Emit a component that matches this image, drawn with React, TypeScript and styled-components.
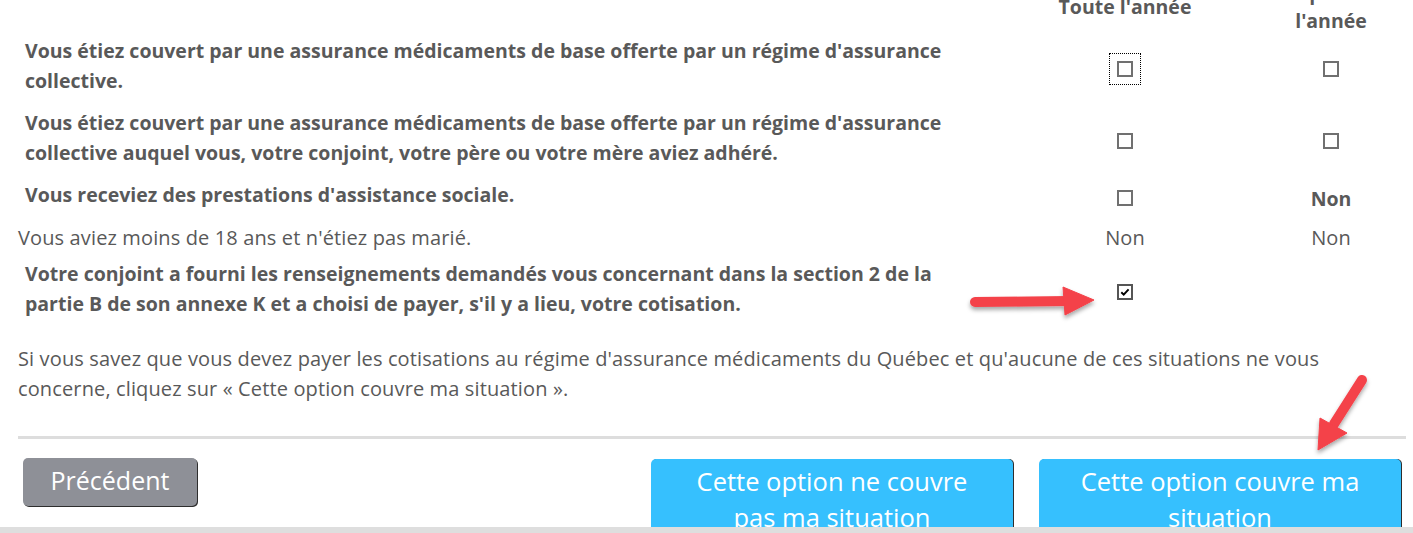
import React from "react";
import styled, { createGlobalStyle } from "styled-components";

const Global = createGlobalStyle`
  html, body { margin: 0; padding: 0; overflow: hidden; background: #ffffff; }
  body { font-family: "Open Sans", "Noto Sans", "Liberation Sans", sans-serif; color: #595959; }
`;

const COLS = "976px 262px 150px";

const Root = styled.div`
  position: relative;
  width: 1413px;
  height: 533px;
  overflow: hidden;
`;

const Page = styled.div`
  width: 1388px;
  padding-left: 18px;
  margin-top: -21px;
`;

const HeadRow = styled.div`
  display: grid;
  grid-template-columns: ${COLS};
  align-items: center;
  height: 56px;
  font-size: 19.5px;
  font-weight: 700;
  line-height: 28px;
  text-align: center;
`;

const Row = styled.div<{ $plain?: boolean; $first?: boolean }>`
  display: grid;
  grid-template-columns: ${COLS};
  align-items: center;
  padding-top: ${(p) => (p.$first || p.$plain ? "1px" : "0")};
  padding-bottom: ${(p) => (p.$plain ? "6px" : "12px")};
`;

const Label = styled.div<{ $bold?: boolean }>`
  padding-left: ${(p) => (p.$bold ? "7px" : "0")};
  font-size: ${(p) => (p.$bold ? "19.5px" : "20px")};
  letter-spacing: ${(p) => (p.$bold ? "0" : "0.13px")};
  line-height: 30px;
  font-weight: ${(p) => (p.$bold ? 700 : 400)};
`;

const Cell = styled.div`
  display: flex;
  justify-content: center;
  align-items: center;
  height: 100%;
`;

const Box = styled.span<{ $focused?: boolean; $checked?: boolean }>`
  display: inline-flex;
  align-items: center;
  justify-content: center;
  box-sizing: border-box;
  width: 16px;
  height: 16px;
  transform: translateY(3px);
  border: 2px solid ${(p) => (p.$checked ? "#555555" : "#707070")};
  background: #ffffff;
  outline: ${(p) => (p.$focused ? "1px dotted #000000" : "none")};
  outline-offset: 7px;
`;

const Answer = styled.span<{ $bold?: boolean; $shift?: boolean }>`
  font-size: ${(p) => (p.$bold ? "19.5px" : "20px")};
  line-height: 30px;
  font-weight: ${(p) => (p.$bold ? 700 : 400)};
  transform: ${(p) => (p.$shift ? "translateY(4px)" : "none")};
`;

const Note = styled.p`
  margin: 13px 0 0;
  font-size: 20px;
  letter-spacing: 0.13px;
  line-height: 30px;
`;

const Divider = styled.div`
  margin-top: 32px;
  height: 3px;
  background: #dddddd;
`;

const Actions = styled.div`
  display: flex;
  justify-content: space-between;
  align-items: flex-start;
  margin-top: 19px;
  padding: 0 5px;
`;

const PrevButton = styled.button`
  width: 174px;
  height: 48px;
  padding: 0 0 4px;
  border: none;
  border-radius: 5px;
  background: #8e9097;
  box-shadow: 1px 1px 0 #2e2e2e;
  color: #ffffff;
  font-family: inherit;
  font-size: 25px;
  line-height: 40px;
`;

const Group = styled.div`
  display: flex;
  gap: 26px;
  margin-top: 1px;
`;

const BlueButton = styled.button`
  width: 362px;
  padding: 4px 6px 12px;
  border: none;
  border-radius: 5px 5px 0 0;
  background: #36c0fe;
  box-shadow: 1px 0 0 #2e2e2e;
  color: #ffffff;
  font-family: inherit;
  font-size: 25.5px;
  line-height: 36px;
  text-align: center;
`;

const BottomBar = styled.div`
  position: absolute;
  left: 0;
  right: 0;
  bottom: 0;
  height: 6px;
  background: #dedede;
`;

const Overlay = styled.svg`
  position: absolute;
  top: 0;
  left: 0;
  pointer-events: none;
`;

function Check({ focused, checked }: { focused?: boolean; checked?: boolean }) {
  return (
    <Box $focused={focused} $checked={checked}>
      {checked && (
        <svg width="12" height="12" viewBox="0 0 12 12">
          <path d="M2.3 6.3 L4.7 8.6 L9.6 3.4" fill="none" stroke="#000" strokeWidth="2" />
        </svg>
      )}
    </Box>
  );
}

export default function App() {
  return (
    <Root>
      <Global />
      <Page>
        <HeadRow>
          <div />
          <div>Toute l'année</div>
          <div>Une partie de l'année</div>
        </HeadRow>

        <Row $first>
          <Label $bold>
            Vous étiez couvert par une assurance médicaments de base offerte par un régime d'assurance
            <br />
            collective.
          </Label>
          <Cell>
            <Check focused />
          </Cell>
          <Cell>
            <Check />
          </Cell>
        </Row>

        <Row>
          <Label $bold>
            Vous étiez couvert par une assurance médicaments de base offerte par un régime d'assurance
            <br />
            collective auquel vous, votre conjoint, votre père ou votre mère aviez adhéré.
          </Label>
          <Cell>
            <Check />
          </Cell>
          <Cell>
            <Check />
          </Cell>
        </Row>

        <Row>
          <Label $bold>Vous receviez des prestations d'assistance sociale.</Label>
          <Cell>
            <Check />
          </Cell>
          <Cell>
            <Answer $bold $shift>Non</Answer>
          </Cell>
        </Row>

        <Row $plain>
          <Label>Vous aviez moins de 18 ans et n'étiez pas marié.</Label>
          <Cell>
            <Answer>Non</Answer>
          </Cell>
          <Cell>
            <Answer>Non</Answer>
          </Cell>
        </Row>

        <Row>
          <Label $bold>
            Votre conjoint a fourni les renseignements demandés vous concernant dans la section 2 de la
            <br />
            partie B de son annexe K et a choisi de payer, s'il y a lieu, votre cotisation.
          </Label>
          <Cell>
            <Check checked />
          </Cell>
          <Cell />
        </Row>

        <Note>
          Si vous savez que vous devez payer les cotisations au régime d'assurance médicaments du Québec et qu'aucune de ces situations ne vous
          <br />
          concerne, cliquez sur « Cette option couvre ma situation ».
        </Note>

        <Divider />

        <Actions>
          <PrevButton>Précédent</PrevButton>
          <Group>
            <BlueButton>
              Cette option ne couvre
              <br />
              pas ma situation
            </BlueButton>
            <BlueButton>
              Cette option couvre ma
              <br />
              situation
            </BlueButton>
          </Group>
        </Actions>
      </Page>

      <Overlay width="1413" height="533" viewBox="0 0 1413 533">
        <defs>
          <filter id="shadow" x="-20%" y="-20%" width="140%" height="160%">
            <feDropShadow dx="0" dy="3" stdDeviation="2" floodColor="#000" floodOpacity="0.35" />
          </filter>
        </defs>
        <g filter="url(#shadow)" fill="#f4424a" stroke="#f4424a">
          <line x1="975" y1="302" x2="1068" y2="301" strokeWidth="10" strokeLinecap="round" />
          <polygon points="1063,287 1094,300 1065,315" strokeWidth="1" strokeLinejoin="round" />
          <line x1="1362" y1="380" x2="1334" y2="424" strokeWidth="10" strokeLinecap="round" />
          <polygon points="1320,418 1347,433 1318,450" strokeWidth="1" strokeLinejoin="round" />
        </g>
      </Overlay>

      <BottomBar />
    </Root>
  );
}
